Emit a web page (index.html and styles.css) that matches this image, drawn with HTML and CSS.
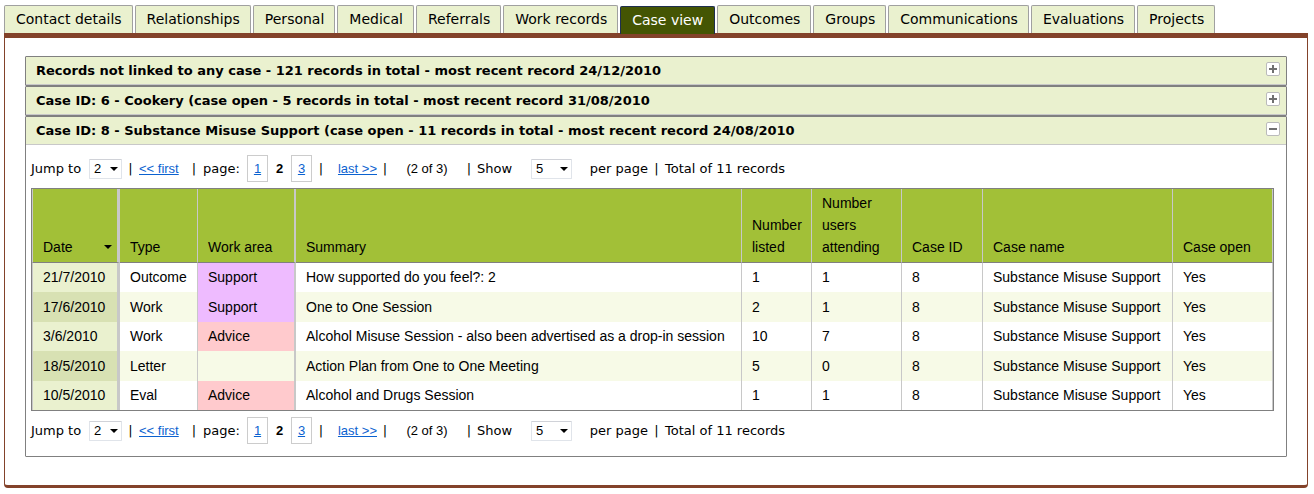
FILE: index.html
```html
<!DOCTYPE html>
<html lang="en">
<head>
<meta charset="utf-8">
<title>Case view</title>
<link rel="stylesheet" href="styles.css">
</head>
<body>
<nav class="tabs" aria-label="Contact sections">
  <a class="tab" href="#contact">Contact details</a>
  <a class="tab" href="#relationships">Relationships</a>
  <a class="tab" href="#personal">Personal</a>
  <a class="tab" href="#medical">Medical</a>
  <a class="tab" href="#referrals">Referrals</a>
  <a class="tab" href="#work">Work records</a>
  <a class="tab tab-active" href="#cases" aria-current="page">Case view</a>
  <a class="tab" href="#outcomes">Outcomes</a>
  <a class="tab" href="#groups">Groups</a>
  <a class="tab" href="#communications">Communications</a>
  <a class="tab" href="#evaluations">Evaluations</a>
  <a class="tab" href="#projects">Projects</a>
</nav>
<main class="panel">
  <section class="case">
    <button class="case-head" type="button" aria-expanded="false">
      <span>Records not linked to any case - 121 records in total - most recent record 24/12/2010</span>
      <svg class="toggle" viewBox="0 0 14 14" aria-hidden="true"><rect class="toggle-box" x=".5" y=".5" width="13" height="13" rx="1.5"/><path class="toggle-sign" d="M3 7h8M7 3v8"/></svg>
    </button>
  </section>
  <section class="case">
    <button class="case-head" type="button" aria-expanded="false">
      <span>Case ID: 6 - Cookery (case open - 5 records in total - most recent record 31/08/2010</span>
      <svg class="toggle" viewBox="0 0 14 14" aria-hidden="true"><rect class="toggle-box" x=".5" y=".5" width="13" height="13" rx="1.5"/><path class="toggle-sign" d="M3 7h8M7 3v8"/></svg>
    </button>
  </section>
  <section class="case">
    <button class="case-head" type="button" aria-expanded="true">
      <span>Case ID: 8 - Substance Misuse Support (case open - 11 records in total - most recent record 24/08/2010</span>
      <svg class="toggle" viewBox="0 0 14 14" aria-hidden="true"><rect class="toggle-box" x=".5" y=".5" width="13" height="13" rx="1.5"/><path class="toggle-sign" d="M3 7h8"/></svg>
    </button>
    <div class="case-body">
      <div class="pager">
        <label for="jump-top">Jump to</label>
        <span class="drop"><select id="jump-top"><option>1</option><option selected>2</option><option>3</option></select></span>
        <span class="bar">|</span>
        <a class="link" href="#first">&lt;&lt; first</a>
        <span class="bar">|</span>
        <span>page:</span>
        <a class="link page" href="#page1">1</a>
        <b class="current">2</b>
        <a class="link page" href="#page3">3</a>
        <span class="bar">|</span>
        <a class="link end" href="#last">last &gt;&gt;</a>
        <span class="bar">|</span>
        <span class="count">(2 of 3)</span>
        <span class="bar">|</span>
        <label for="show-top">Show</label>
        <span class="drop"><select id="show-top"><option>5</option><option>10</option></select></span>
        <span class="end">per page</span>
        <span class="bar">|</span>
        <span>Total of 11 records</span>
      </div>
      <table class="records">
        <colgroup>
          <col class="w-date"><col class="w-type"><col class="w-area"><col><col class="w-listed"><col class="w-users"><col class="w-id"><col class="w-name"><col class="w-open">
        </colgroup>
        <thead>
          <tr>
            <th class="date"><span class="sort">Date <svg class="arrow" viewBox="0 0 8 4" aria-hidden="true"><path d="M0 0h8L4 4z"/></svg></span></th>
            <th>Type</th><th class="area">Work area</th><th>Summary</th><th>Number listed</th><th>Number users attending</th><th>Case ID</th><th>Case name</th><th>Case open</th>
          </tr>
        </thead>
        <tbody>
          <tr><td class="date">21/7/2010</td><td>Outcome</td><td class="area support">Support</td><td>How supported do you feel?: 2</td><td>1</td><td>1</td><td>8</td><td>Substance Misuse Support</td><td>Yes</td></tr>
          <tr><td class="date">17/6/2010</td><td>Work</td><td class="area support">Support</td><td>One to One Session</td><td>2</td><td>1</td><td>8</td><td>Substance Misuse Support</td><td>Yes</td></tr>
          <tr><td class="date">3/6/2010</td><td>Work</td><td class="area advice">Advice</td><td>Alcohol Misuse Session - also been advertised as a drop-in session</td><td>10</td><td>7</td><td>8</td><td>Substance Misuse Support</td><td>Yes</td></tr>
          <tr><td class="date">18/5/2010</td><td>Letter</td><td class="area"></td><td>Action Plan from One to One Meeting</td><td>5</td><td>0</td><td>8</td><td>Substance Misuse Support</td><td>Yes</td></tr>
          <tr><td class="date">10/5/2010</td><td>Eval</td><td class="area advice">Advice</td><td>Alcohol and Drugs Session</td><td>1</td><td>1</td><td>8</td><td>Substance Misuse Support</td><td>Yes</td></tr>
        </tbody>
      </table>
      <div class="pager">
        <label for="jump-end">Jump to</label>
        <span class="drop"><select id="jump-end"><option>1</option><option selected>2</option><option>3</option></select></span>
        <span class="bar">|</span>
        <a class="link" href="#first">&lt;&lt; first</a>
        <span class="bar">|</span>
        <span>page:</span>
        <a class="link page" href="#page1">1</a>
        <b class="current">2</b>
        <a class="link page" href="#page3">3</a>
        <span class="bar">|</span>
        <a class="link end" href="#last">last &gt;&gt;</a>
        <span class="bar">|</span>
        <span class="count">(2 of 3)</span>
        <span class="bar">|</span>
        <label for="show-end">Show</label>
        <span class="drop"><select id="show-end"><option>5</option><option>10</option></select></span>
        <span class="end">per page</span>
        <span class="bar">|</span>
        <span>Total of 11 records</span>
      </div>
    </div>
  </section>
</main>
</body>
</html>
```
FILE: styles.css
```css
* { box-sizing: border-box; }
body {
  margin: 0;
  padding: 5px 6px 6px 4px;
  background: #fff;
  color: #000;
  font: 13px/18px "DejaVu Sans", sans-serif;
}
.tabs { display: flex; gap: 2px; }
.tab {
  height: 28px;
  padding: 0 10px 0 11px;
  border: 1px solid #a0a0a0;
  border-bottom: 0;
  border-radius: 2px 2px 0 0;
  background: #eaf1cf;
  color: #000;
  font-size: 14px;
  line-height: 27px;
  text-decoration: none;
  white-space: nowrap;
}
.tab-active {
  position: relative;
  margin: 1px 0 -1px;
  padding: 0 11px;
  border-color: #1f2f50;
  background: #445503;
  color: #fff;
}
.panel {
  padding: 18px 20px 28px;
  border: 1px solid #83422a;
  border-top-width: 5px;
  border-bottom-width: 3px;
  border-radius: 0 0 4px 4px;
}
.case { border: 1px solid #808080; border-radius: 1px; }
.case-head {
  display: flex;
  justify-content: space-between;
  width: 100%;
  height: 28px;
  padding: 5px 6px 0 10px;
  border: 0;
  border-bottom: 1px solid #c8c8c8;
  background: #eaf1cf;
  color: #000;
  font: bold 13px/18px "DejaVu Sans", sans-serif;
  text-align: left;
}
.toggle { width: 14px; height: 14px; }
.toggle-box { fill: #fff; stroke: #bbb; }
.toggle-sign { fill: none; stroke: #707070; stroke-width: 2; }
.case-body {
  display: grid;
  gap: 6px;
  padding: 10px 12px 12px 5px;
}
.pager {
  display: grid;
  grid-template-columns: 58px 33px 17px 46px 18px 44px 21px 23px 21px 18px 47px 16px 68px 16px 54px 41px 76px 17px auto;
  align-items: center;
  height: 27px;
  white-space: nowrap;
}
.bar, .current, .count { text-align: center; }
.end { text-align: right; }
.link { color: #0b62d0; font: 13px/18px "Liberation Sans", sans-serif; }
.page {
  padding: 4px 0 3px;
  border: 1px solid #ccc;
  text-align: center;
}
.current, .count { font-family: "Liberation Sans", sans-serif; font-size: 13px; }
.drop { position: relative; display: grid; }
.drop::after {
  content: "";
  position: absolute;
  right: 4px;
  top: 8px;
  border: 4px solid transparent;
  border-top-color: #000;
  border-bottom: 0;
  pointer-events: none;
}
.drop select {
  appearance: none;
  height: 20px;
  padding: 0 4px;
  border: 1px solid #e0e4ea;
  border-top-color: #d0d2d8;
  border-radius: 1px;
  background: #fff;
  color: #000;
  font: 13px/18px "Liberation Sans", sans-serif;
}
.records {
  width: 100%;
  table-layout: fixed;
  border: 1px solid #808080;
  border-collapse: separate;
  border-spacing: 0;
  font: 14px/22px "Liberation Sans", sans-serif;
}
.w-date { width: 88px; }
.w-type { width: 78px; }
.w-area { width: 98px; }
.w-listed { width: 70px; }
.w-users { width: 90px; }
.w-id { width: 81px; }
.w-name { width: 190px; }
.w-open { width: 100px; }
.records th, .records td {
  padding: 3px 0 4px 10px;
  border-right: 1px solid #c8c8c8;
  text-align: left;
}
.records th {
  border-bottom: 1px solid #808080;
  background: #a2c037;
  font-weight: normal;
  vertical-align: bottom;
}
.records td { white-space: nowrap; }
.records tbody tr:nth-child(even) td { padding-top: 4px; background: #f7fae7; }
.records .date { border-left: 1px solid #c8c8c8; border-right-width: 3px; }
.records .area { border-right-width: 2px; }
.records td.date { background: #eaf1cf; }
.records tbody tr:nth-child(even) td.date { background: #d8e1b3; }
.records tbody tr td.support, .records tbody tr:nth-child(even) td.support { background: #eebbff; }
.records tbody tr td.advice { background: #ffcacd; }
.sort { display: flex; align-items: center; justify-content: space-between; padding-right: 5px; }
.arrow { width: 8px; height: 4px; }
```
